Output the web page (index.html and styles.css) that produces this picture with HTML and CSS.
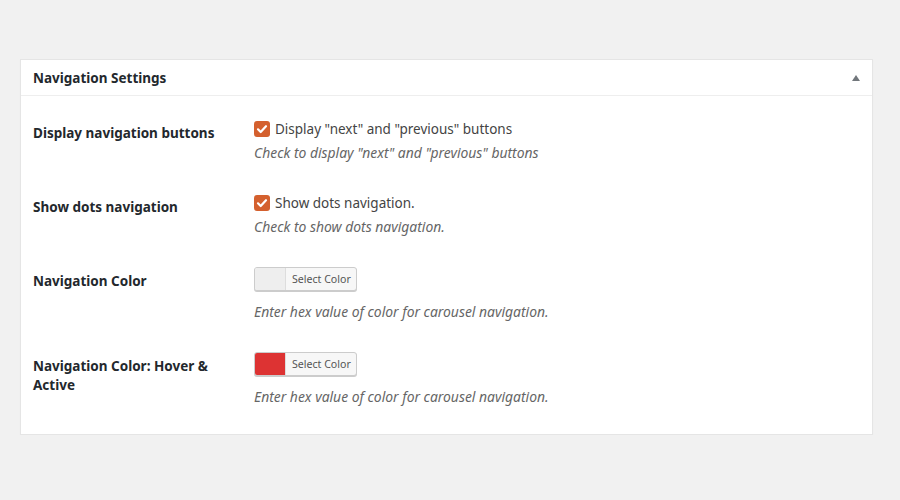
FILE: index.html
```html
<!DOCTYPE html>
<html>
<head>
<meta charset="utf-8">
<link rel="stylesheet" href="styles.css">
</head>
<body>
<div class="postbox">
  <div class="hndle">
    <h2>Navigation Settings</h2>
    <span class="toggle"></span>
  </div>
  <div class="inside">
    <div class="row">
      <div class="th">Display navigation buttons</div>
      <div class="td">
        <label class="check"><span class="box"><svg viewBox="0 0 16 16" width="16" height="16"><path d="M4 8.3l2.7 2.7L12 5.2" fill="none" stroke="#fff" stroke-width="2.2" stroke-linecap="round" stroke-linejoin="round"/></svg></span>Display "next" and "previous" buttons</label>
        <p class="desc">Check to display "next" and "previous" buttons</p>
      </div>
    </div>
    <div class="row">
      <div class="th">Show dots navigation</div>
      <div class="td">
        <label class="check"><span class="box"><svg viewBox="0 0 16 16" width="16" height="16"><path d="M4 8.3l2.7 2.7L12 5.2" fill="none" stroke="#fff" stroke-width="2.2" stroke-linecap="round" stroke-linejoin="round"/></svg></span>Show dots navigation.</label>
        <p class="desc">Check to show dots navigation.</p>
      </div>
    </div>
    <div class="row">
      <div class="th">Navigation Color</div>
      <div class="td">
        <button class="picker"><span class="swatch"></span><span class="ptext">Select Color</span></button>
        <p class="desc desc-color">Enter hex value of color for carousel navigation.</p>
      </div>
    </div>
    <div class="row">
      <div class="th">Navigation Color: Hover &amp; Active</div>
      <div class="td">
        <button class="picker"><span class="swatch red"></span><span class="ptext">Select Color</span></button>
        <p class="desc desc-color">Enter hex value of color for carousel navigation.</p>
      </div>
    </div>
  </div>
</div>
</body>
</html>
```
FILE: styles.css
```css
html, body {
  margin: 0;
  padding: 0;
  background: #f1f1f1;
}
body {
  font-family: "Noto Sans", "Open Sans", sans-serif;
  color: #444;
  padding: 59px 27px 0 20px;
}
.postbox {
  background: #fff;
  border: 1px solid #e5e5e5;
  box-shadow: 0 1px 1px rgba(0,0,0,0.04);
  width: 851px;
}
.hndle {
  height: 35px;
  border-bottom: 1px solid #eee;
  display: flex;
  align-items: center;
  justify-content: space-between;
  padding: 0 12px;
}
.hndle h2 {
  margin: 0;
  font-size: 13.5px;
  font-weight: 700;
  color: #23282d;
}
.toggle {
  width: 0;
  height: 0;
  border-left: 4px solid transparent;
  border-right: 4px solid transparent;
  border-bottom: 6px solid #72777c;
}
.inside {
  padding: 8px 12px 12px;
}
.row {
  display: flex;
}
.th {
  width: 201px;
  flex: none;
  padding: 20px 10px 20px 0;
  font-size: 13.5px;
  font-weight: 700;
  line-height: 19px;
  color: #23282d;
}
.td {
  padding: 15px 10px;
}
.check {
  display: flex;
  align-items: center;
  font-size: 13.5px;
  color: #444;
  line-height: 20px;
  height: 20px;
}
.box {
  width: 16px;
  height: 16px;
  border-radius: 3px;
  background: #d4602e;
  margin-right: 5px;
  display: inline-flex;
}
.desc {
  margin: 4px 0 0;
  font-size: 13.9px;
  font-style: italic;
  color: #666;
  line-height: 20px;
}
.desc-color {
  margin-top: 11px;
}
.picker {
  display: flex;
  height: 24px;
  padding: 0;
  border: 1px solid #ccc;
  border-radius: 3px;
  background: #f7f7f7;
  box-shadow: 0 1px 0 #ccc;
  overflow: hidden;
  font-family: inherit;
  cursor: pointer;
}
.swatch {
  width: 30px;
  height: 100%;
  background: #eeeeee;
  border-right: 1px solid #ddd;
}
.swatch.red {
  background: #dd3333;
}
.ptext {
  padding: 0 5px 0 6px;
  font-size: 10.6px;
  line-height: 22px;
  color: #555;
}
```
